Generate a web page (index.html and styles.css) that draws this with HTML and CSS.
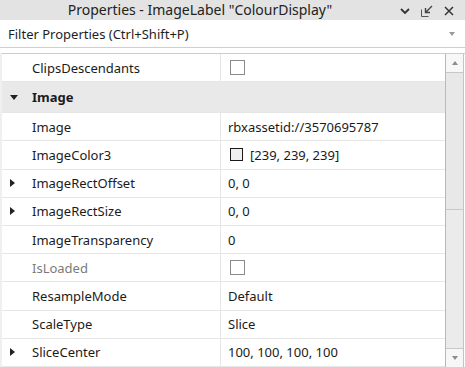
FILE: index.html
```html
<!DOCTYPE html>
<html>
<head>
<meta charset="utf-8">
<link rel="stylesheet" href="styles.css">
</head>
<body>
<div class="window">
  <div class="titlebar">
    <div class="title">Properties - ImageLabel "ColourDisplay"</div>
    <div class="tools">
      <svg class="tool" width="12" height="12" viewBox="0 0 12 12"><path d="M2 4 L6 8 L10 4" fill="none" stroke="#333" stroke-width="1.8"/></svg>
      <svg class="tool" width="14" height="14" viewBox="0 0 14 14"><path d="M1.5 5.5 V12.5 H8.5" fill="none" stroke="#555" stroke-width="1"/><path d="M12 2 L6 8 M5.5 4 V8.5 H10" fill="none" stroke="#444" stroke-width="1.4"/></svg>
      <svg class="tool" width="12" height="12" viewBox="0 0 12 12"><path d="M2 2 L10 10 M10 2 L2 10" fill="none" stroke="#333" stroke-width="1.5"/></svg>
    </div>
  </div>
  <div class="filter">
    <span class="filter-text">Filter Properties (Ctrl+Shift+P)</span>
    <span class="drop"></span>
  </div>
  <div class="gap"></div>
  <div class="grid">
    <div class="rows">
      <div class="row"><div class="name"><span class="exp"></span>ClipsDescendants</div><div class="val"><span class="check"></span></div></div>
      <div class="row cat"><div class="name"><span class="exp"><span class="tri-down"></span></span>Image</div></div>
      <div class="row"><div class="name"><span class="exp"></span>Image</div><div class="val">rbxassetid://3570695787</div></div>
      <div class="row"><div class="name"><span class="exp"></span>ImageColor3</div><div class="val"><span class="swatch"></span>[239, 239, 239]</div></div>
      <div class="row"><div class="name"><span class="exp"><span class="tri-right"></span></span>ImageRectOffset</div><div class="val">0, 0</div></div>
      <div class="row"><div class="name"><span class="exp"><span class="tri-right"></span></span>ImageRectSize</div><div class="val">0, 0</div></div>
      <div class="row"><div class="name"><span class="exp"></span>ImageTransparency</div><div class="val">0</div></div>
      <div class="row"><div class="name dim"><span class="exp"></span>IsLoaded</div><div class="val"><span class="check"></span></div></div>
      <div class="row"><div class="name"><span class="exp"></span>ResampleMode</div><div class="val">Default</div></div>
      <div class="row"><div class="name"><span class="exp"></span>ScaleType</div><div class="val">Slice</div></div>
      <div class="row"><div class="name"><span class="exp"><span class="tri-right"></span></span>SliceCenter</div><div class="val">100, 100, 100, 100</div></div>
    </div>
    <div class="scrollbar">
      <div class="sb-btn"><span class="sb-up"></span></div>
      <div class="sb-track"><div class="sb-thumb"></div></div>
      <div class="sb-btn"><span class="sb-down"></span></div>
    </div>
  </div>
</div>
</body>
</html>
```
FILE: styles.css
```css
html, body {
  margin: 0;
  padding: 0;
}
body {
  width: 465px;
  height: 367px;
  overflow: hidden;
  background: #f0f0f0;
  font-family: "Noto Sans", "Open Sans", sans-serif;
  color: #1b1b1b;
}
.window {
  display: flex;
  flex-direction: column;
  height: 367px;
}
.titlebar {
  height: 20px;
  background: #e3e3e3;
  display: flex;
  align-items: center;
  position: relative;
}
.title {
  width: 400px;
  text-align: center;
  font-size: 14px;
  color: #222;
  line-height: 20px;
}
.tools {
  display: flex;
  align-items: center;
  gap: 9px;
  padding-right: 10px;
  position: absolute;
  right: 0;
  top: 4px;
}
.tool { display: block; }
.filter {
  height: 27px;
  background: #ffffff;
  border-bottom: 1px solid #cfcfcf;
  display: flex;
  align-items: center;
  padding-left: 8px;
  padding-right: 10px;
}
.filter-text {
  flex: 1;
  font-size: 13px;
  color: #1e1e1e;
}
.drop {
  width: 0;
  height: 0;
  border-left: 3.5px solid transparent;
  border-right: 3.5px solid transparent;
  border-top: 4px solid #9a9a9a;
}
.gap {
  height: 5px;
  background: #ffffff;
}
.grid {
  flex: 1;
  display: flex;
  border-top: 1px solid #cccccc;
  margin-left: 2px;
  background: #ffffff;
  overflow: hidden;
}
.rows {
  flex: 1;
}
.row {
  height: 27.2px;
  border-bottom: 1px solid #e6e6e6;
  display: flex;
  align-items: center;
  font-size: 13px;
}
.row.cat {
  height: 30px;
  background: #e9e9e9;
  font-weight: bold;
}
.name {
  width: 219px;
  display: flex;
  align-items: center;
  height: 100%;
  border-right: 1px solid #e6e6e6;
  box-sizing: border-box;
}
.row.cat .name { border-right: none; }
.name.dim { color: #7b7b7b; }
.exp {
  width: 30px;
  display: flex;
  align-items: center;
  padding-left: 8px;
  box-sizing: border-box;
}
.tri-right {
  width: 0;
  height: 0;
  border-top: 4.5px solid transparent;
  border-bottom: 4.5px solid transparent;
  border-left: 5px solid #222;
}
.tri-down {
  width: 0;
  height: 0;
  border-left: 4.5px solid transparent;
  border-right: 4.5px solid transparent;
  border-top: 5px solid #222;
}
.val {
  flex: 1;
  padding-left: 7px;
  display: flex;
  align-items: center;
}
.check {
  width: 13px;
  height: 13px;
  border: 1px solid #8a8a8a;
  background: #fff;
  margin-left: 2px;
}
.swatch {
  width: 11px;
  height: 11px;
  border: 1.5px solid #1a1a1a;
  background: rgb(239, 239, 239);
  margin-left: 2px;
  margin-right: 7px;
}
.scrollbar {
  width: 17px;
  border-left: 1px solid #b8b8b8;
  border-right: 1px solid #c4c4c4;
  display: flex;
  flex-direction: column;
  background: #f0f0f0;
  margin-right: 1px;
}
.sb-btn {
  height: 18px;
  background: #f7f7f7;
  display: flex;
  align-items: center;
  justify-content: center;
}
.sb-up {
  width: 0;
  height: 0;
  border-left: 3.5px solid transparent;
  border-right: 3.5px solid transparent;
  border-bottom: 4px solid #8c8c8c;
}
.sb-down {
  width: 0;
  height: 0;
  border-left: 3.5px solid transparent;
  border-right: 3.5px solid transparent;
  border-top: 4px solid #8c8c8c;
}
.sb-track {
  flex: 1;
  background: #ebebeb;
  border-top: 1px solid #c8c8c8;
  border-bottom: 1px solid #c8c8c8;
}
.sb-thumb {
  height: 136px;
  background: #e8e8e8;
  border-bottom: 1px solid #c8c8c8;
}
```
